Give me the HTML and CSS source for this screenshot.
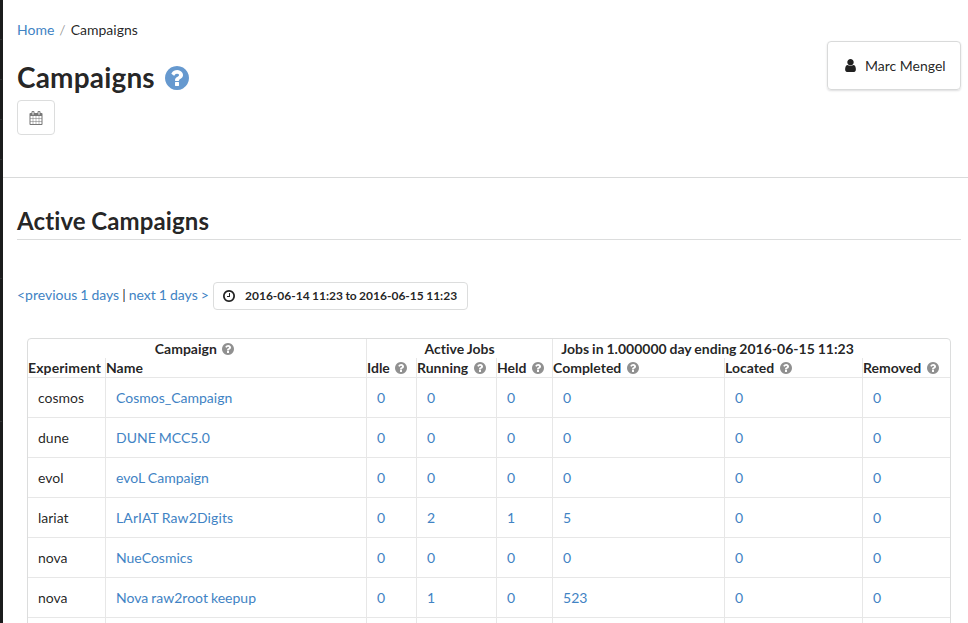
FILE: index.html
```html
<!DOCTYPE html>
<html lang="en">
<head>
<meta charset="utf-8">
<title>Campaigns</title>
<link rel="stylesheet" href="styles.css">
</head>
<body>
<svg class="sprite" aria-hidden="true">
  <symbol id="help" viewBox="0 0 1792 1792"><path d="M1024 1376v-192q0-14-9-23t-23-9h-192q-14 0-23 9t-9 23v192q0 14 9 23t23 9h192q14 0 23-9t9-23zm256-672q0-88-55.500-163t-138.500-116-170-41q-243 0-371 213-15 24 8 42l132 100q7 6 19 6 16 0 25-12 53-68 86-92 34-24 86-24 48 0 85.500 26t37.500 59q0 38-20 61t-68 45q-63 28-115.500 86.500t-52.500 125.500v36q0 14 9 23t23 9h192q14 0 23-9t9-23q0-19 21.500-49.500t54.500-49.500q32-18 49-28.500t46-35 44.500-48 28-60.500 12.500-81zm384 192q0 209-103 385.500t-279.500 279.500-385.500 103-385.500-103-279.500-279.500-103-385.500 103-385.500 279.500-279.500 385.500-103 385.500 103 279.500 279.500 103 385.500z"/></symbol>
  <symbol id="user" viewBox="0 0 1792 1792"><path d="M1536 1399q0 109-62.500 187t-150.500 78h-854q-88 0-150.500-78t-62.500-187q0-85 8.500-160.500t31.500-152 58.500-131 94-89 134.500-34.500q131 128 313 128t313-128q76 0 134.500 34.500t94 89 58.500 131 31.500 152 8.500 160.500zm-256-887q0 159-112.500 271.500t-271.500 112.500-271.500-112.500-112.500-271.500 112.500-271.500 271.500-112.500 271.500 112.500 112.500 271.500z"/></symbol>
  <symbol id="clock" viewBox="0 0 1792 1792"><path d="M1024 544v448q0 14-9 23t-23 9h-320q-14 0-23-9t-9-23v-64q0-14 9-23t23-9h224v-352q0-14 9-23t23-9h64q14 0 23 9t9 23zm416 352q0-148-73-273t-198-198-273-73-273 73-198 198-73 273 73 273 198 198 273 73 273-73 198-198 73-273zm224 0q0 209-103 385.500t-279.500 279.500-385.500 103-385.500-103-279.500-279.500-103-385.500 103-385.500 279.500-279.500 385.500-103 385.500 103 279.500 279.500 103 385.500z"/></symbol>
  <symbol id="calendar" viewBox="0 0 1792 1792"><path d="M192 1664h288v-288h-288v288zm352 0h320v-288h-320v288zm-352-352h288v-320h-288v320zm352 0h320v-320h-320v320zm-352-384h288v-288h-288v288zm736 736h320v-288h-320v288zm-384-736h320v-288h-320v288zm768 736h288v-288h-288v288zm-384-352h320v-320h-320v320zm-352-864v-288q0-13-9.500-22.500t-22.500-9.500h-64q-13 0-22.500 9.500t-9.500 22.500v288q0 13 9.500 22.500t22.500 9.500h64q13 0 22.500-9.500t9.500-22.500zm736 864h288v-320h-288v320zm-384-384h320v-288h-320v288zm384 0h288v-288h-288v288zm32-480v-288q0-13-9.500-22.500t-22.500-9.500h-64q-13 0-22.500 9.500t-9.500 22.500v288q0 13 9.500 22.500t22.500 9.500h64q13 0 22.500-9.500t9.500-22.500zm384-64v1280q0 52-38 90t-90 38h-1408q-52 0-90-38t-38-90v-1280q0-52 38-90t90-38h128v-96q0-66 47-113t113-47h64q66 0 113 47t47 113v96h384v-96q0-66 47-113t113-47h64q66 0 113 47t47 113v96h128q52 0 90 38t38 90z"/></symbol>
</svg>
<div class="page">
  <aside class="sidebar"></aside>
  <main class="main">
    <header class="top">
      <div>
        <nav class="breadcrumb"><a href="#">Home</a><span class="divider">/</span><span>Campaigns</span></nav>
        <h1>Campaigns <svg class="icon-large"><use href="#help"/></svg></h1>
        <button class="calendar-button" aria-label="Calendar"><svg class="icon"><use href="#calendar"/></svg></button>
      </div>
      <div class="user-card"><svg class="icon"><use href="#user"/></svg><span>Marc Mengel</span></div>
    </header>
    <section class="content">
      <h2>Active Campaigns</h2>
      <div class="range">
        <span class="range-links"><a href="#">&lt;previous 1 days</a> | <a href="#">next 1 days &gt;</a></span>
        <button class="range-button"><svg class="icon"><use href="#clock"/></svg><span>2016-06-14 11:23 to 2016-06-15 11:23</span></button>
      </div>
      <table class="campaigns">
        <colgroup><col class="c-exp"><col class="c-name"><col class="c-idle"><col class="c-run"><col class="c-held"><col class="c-done"><col class="c-loc"><col class="c-rem"></colgroup>
        <thead>
          <tr class="groups"><th colspan="2">Campaign <svg class="icon"><use href="#help"/></svg></th><th colspan="3">Active Jobs</th><th colspan="2">Jobs in 1.000000 day ending 2016-06-15 11:23</th><th class="plain"></th></tr>
          <tr class="labels"><th>Experiment</th><th>Name</th><th>Idle <svg class="icon"><use href="#help"/></svg></th><th>Running <svg class="icon"><use href="#help"/></svg></th><th>Held <svg class="icon"><use href="#help"/></svg></th><th>Completed <svg class="icon"><use href="#help"/></svg></th><th>Located <svg class="icon"><use href="#help"/></svg></th><th>Removed <svg class="icon"><use href="#help"/></svg></th></tr>
        </thead>
        <tbody>
          <tr><td>cosmos</td><td><a href="#">Cosmos_Campaign</a></td><td><a href="#">0</a></td><td><a href="#">0</a></td><td><a href="#">0</a></td><td><a href="#">0</a></td><td><a href="#">0</a></td><td><a href="#">0</a></td></tr>
          <tr><td>dune</td><td><a href="#">DUNE MCC5.0</a></td><td><a href="#">0</a></td><td><a href="#">0</a></td><td><a href="#">0</a></td><td><a href="#">0</a></td><td><a href="#">0</a></td><td><a href="#">0</a></td></tr>
          <tr><td>evol</td><td><a href="#">evoL Campaign</a></td><td><a href="#">0</a></td><td><a href="#">0</a></td><td><a href="#">0</a></td><td><a href="#">0</a></td><td><a href="#">0</a></td><td><a href="#">0</a></td></tr>
          <tr><td>lariat</td><td class="wide"><a href="#">LArIAT Raw2Digits</a></td><td><a href="#">0</a></td><td><a href="#">2</a></td><td><a href="#">1</a></td><td><a href="#">5</a></td><td><a href="#">0</a></td><td><a href="#">0</a></td></tr>
          <tr><td>nova</td><td><a href="#">NueCosmics</a></td><td><a href="#">0</a></td><td><a href="#">0</a></td><td><a href="#">0</a></td><td><a href="#">0</a></td><td><a href="#">0</a></td><td><a href="#">0</a></td></tr>
          <tr><td>nova</td><td><a href="#">Nova raw2root keepup</a></td><td><a href="#">0</a></td><td><a href="#">1</a></td><td><a href="#">0</a></td><td><a href="#">523</a></td><td><a href="#">0</a></td><td><a href="#">0</a></td></tr>
          <tr><td></td><td></td><td></td><td></td><td></td><td></td><td></td><td></td></tr>
        </tbody>
      </table>
    </section>
  </main>
</div>
</body>
</html>
```
FILE: styles.css
```css
* { box-sizing: border-box; }
body {
  margin: 0;
  height: 623px;
  overflow: hidden;
  background: #fff;
  color: rgba(0, 0, 0, .87);
  font: 14px/18px Lato, "Liberation Sans", sans-serif;
  font-variant-ligatures: none;
  word-spacing: -.5px;
}
a { color: #4183c4; text-decoration: none; }
svg { fill: currentColor; }
button { background: #fff; color: inherit; font: inherit; word-spacing: inherit; border: 1px solid #dcdddd; border-radius: 4px; }
.sprite { display: none; }
.icon { width: 14px; height: 14px; flex: none; }
.page { display: flex; height: 623px; overflow: hidden; }
.sidebar {
  width: 3px;
  flex: none;
  background:
    linear-gradient(#303132, #303132) 0 278px / 2px 1px no-repeat,
    linear-gradient(#303132, #303132) 0 421px / 2px 1px no-repeat,
    repeating-linear-gradient(transparent 0 39px, #303132 39px 40px) 0 0 / 2px 160px no-repeat,
    #1b1c1d;
}
.main { flex: 1; min-width: 0; }
.top {
  display: flex;
  justify-content: space-between;
  align-items: flex-start;
  height: 178px;
  padding: 21px 7px 0 14px;
  border-bottom: 1px solid #d9dada;
}
.breadcrumb .divider { margin: 0 5px; color: rgba(0, 0, 0, .4); }
h1 { display: flex; align-items: center; gap: 8px; margin: 20px 0 5px; height: 36px; font-size: 28px; line-height: 36px; letter-spacing: .17px; }
.icon-large { width: 28px; height: 28px; margin-top: 2px; color: #6699cf; }
.calendar-button { display: flex; align-items: center; justify-content: center; width: 38px; height: 35px; padding: 0 1px 0 0; color: #777; }
.user-card {
  display: flex;
  align-items: center;
  gap: 7px;
  width: 134px;
  height: 49px;
  margin-top: 20px;
  padding-left: 15px;
  border: 1px solid #d9dada;
  border-radius: 4px;
  box-shadow: 0 1px 2px rgba(34, 36, 38, .15);
  white-space: nowrap;
  word-spacing: 0;
}
.user-card .icon { width: 15px; height: 15px; }
.content { padding: 27px 7px 0 14px; }
h2 { margin: 0; height: 35px; border-bottom: 1px solid #dcdddd; font-size: 24px; line-height: 31px; letter-spacing: .12px; }
.range { display: flex; align-items: center; gap: 5px; height: 28px; margin-top: 42px; white-space: nowrap; }
.range-links { width: 191px; padding-bottom: 2px; letter-spacing: -.02px; }
.range-button { display: flex; align-items: center; width: 255px; height: 28px; padding: 0 0 0 8px; font-size: 12px; font-weight: 700; }
.range-button .icon { margin-right: 9px; }
.campaigns {
  width: 924px;
  margin: 28px 0 0 10px;
  border: 1px solid #dcdddd;
  border-radius: 4px;
  border-spacing: 0;
  table-layout: fixed;
}
.c-exp { width: 77px; }
.c-name { width: 261px; }
.c-idle { width: 50px; }
.c-run { width: 80px; }
.c-held { width: 56px; }
.c-done { width: 172px; }
.c-loc { width: 138px; }
th { height: 19px; padding: 0; white-space: nowrap; line-height: 19px; }
.labels th { text-align: left; }
.labels th:first-child { letter-spacing: .12px; }
th .icon { margin: 0 0 0 1.5px; vertical-align: -2px; color: #909090; }
.groups .icon { margin-right: 4px; }
td { height: 40px; padding: 0 10px; border-top: 1px solid #e7e7e7; }
td.wide { letter-spacing: .12px; }
th + th, td + td { border-left: 1px solid #e7e7e7; }
th.plain { border-left: 0; }
```
